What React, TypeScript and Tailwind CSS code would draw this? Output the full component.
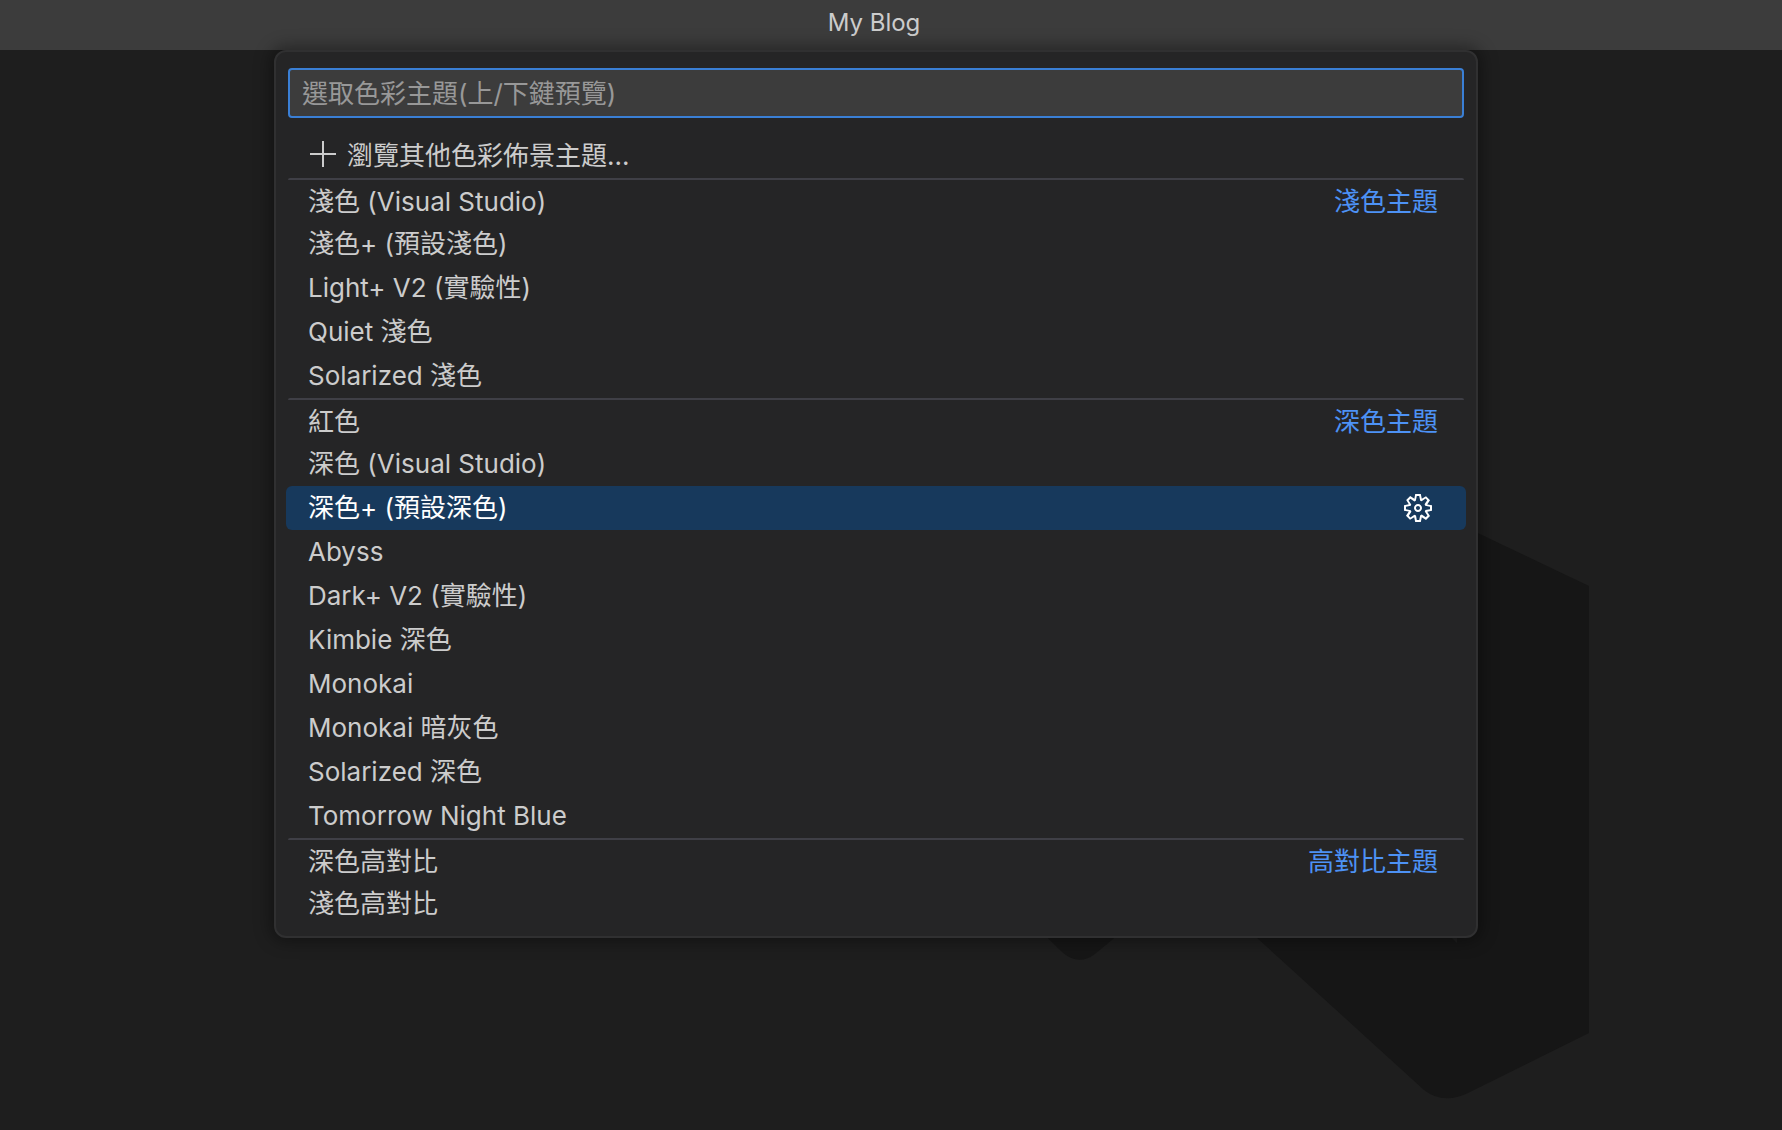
import React from "react";

type Theme = { name: string; selected?: boolean };
type Group = { label: string; themes: Theme[] };

const groups: Group[] = [
  {
    label: "淺色主題",
    themes: [
      { name: "淺色 (Visual Studio)" },
      { name: "淺色+ (預設淺色)" },
      { name: "Light+ V2 (實驗性)" },
      { name: "Quiet 淺色" },
      { name: "Solarized 淺色" },
    ],
  },
  {
    label: "深色主題",
    themes: [
      { name: "紅色" },
      { name: "深色 (Visual Studio)" },
      { name: "深色+ (預設深色)", selected: true },
      { name: "Abyss" },
      { name: "Dark+ V2 (實驗性)" },
      { name: "Kimbie 深色" },
      { name: "Monokai" },
      { name: "Monokai 暗灰色" },
      { name: "Solarized 深色" },
      { name: "Tomorrow Night Blue" },
    ],
  },
  {
    label: "高對比主題",
    themes: [{ name: "深色高對比" }, { name: "淺色高對比" }],
  },
];

function Watermark() {
  return (
    <svg
      className="pointer-events-none absolute top-[484px] left-[1000px]"
      width="600"
      height="620"
      viewBox="1000 484 600 620"
      fill="#161616"
      aria-hidden="true"
    >
      <path d="M1440 515 L1589 586 V1033 L1468 1093 Q1443 1105 1424 1090 L1256 937 L1440 760 Z" />
      <path d="M1452 938 L1457 938 L1457 943 Z" fill="#1e1e1e" />
      <path d="M1030 921 L1063 953 Q1079 966 1095 954 L1135 921 Z" />
    </svg>
  );
}

function GearIcon() {
  return (
    <svg width="32" height="32" viewBox="0 0 16 16" fill="currentColor" aria-hidden="true">
      <path
        fillRule="evenodd"
        clipRule="evenodd"
        d="M9.1 4.4L8.6 2H7.4l-.5 2.4-.7.3-2-1.3-.9.8 1.3 2-.2.7-2.4.5v1.2l2.4.5.3.8-1.3 2 .8.8 2-1.3.8.3.4 2.3h1.2l.5-2.4.8-.3 2 1.3.8-.8-1.3-2 .3-.8 2.3-.4V7.4l-2.4-.5-.3-.8 1.3-2-.8-.8-2 1.3-.7-.2zM9.4 1l.5 2.4L12 2.1l2 2-1.4 2.1 2.4.4v2.8l-2.4.5L14 12l-2 2-2.1-1.4-.5 2.4H6.6l-.5-2.4L4 13.9l-2-2 1.4-2.1L1 9.4V6.6l2.4-.5L2.1 4l2-2 2.1 1.4.4-2.4h2.8zm.6 7c0 1.1-.9 2-2 2s-2-.9-2-2 .9-2 2-2 2 .9 2 2zM8 9c.6 0 1-.4 1-1s-.4-1-1-1-1 .4-1 1 .4 1 1 1z"
      />
    </svg>
  );
}

function ThemeRow({ theme, label }: { theme: Theme; label?: string }) {
  return (
    <li
      className={
        "flex h-11 items-center rounded-md pr-7 " +
        (label ? "pt-1 " : "") +
        (theme.selected ? "bg-[#17395c] text-white" : "text-[#cccccc]")
      }
    >
      <button type="button" className="flex-1 pl-[22px] text-left leading-10">
        {theme.name}
      </button>
      {label && <span className="leading-10 text-[#4d92f5]">{label}</span>}
      {theme.selected && (
        <button type="button" aria-label="設定" className="mr-1">
          <GearIcon />
        </button>
      )}
    </li>
  );
}

export default function App() {
  return (
    <div
      lang="zh-Hant"
      className="relative min-h-screen overflow-hidden bg-[#1e1e1e] font-[Inter,'Noto_Sans_CJK_TC',sans-serif] text-[26px] text-[#cccccc]"
    >
      <Watermark />
      <header className="flex h-[50px] items-center justify-center bg-[#3c3c3c] pr-[34px] pb-1">
        <h1 className="text-2xl">My Blog</h1>
      </header>
      <main className="relative pr-[30px]">
        <section className="mx-auto w-full max-w-[1204px] rounded-xl border-2 border-[#303031] bg-[#252526] px-[10px] pt-4 pb-[10px] shadow-[0_0_16px_4px_rgba(0,0,0,0.36)]">
          <div className="mx-[2px]">
            <input
              type="text"
              aria-label="選取色彩主題"
              placeholder="選取色彩主題(上/下鍵預覽)"
              className="block h-[50px] w-full rounded-[4px] border-2 border-[#3a7fd5] bg-[#3c3c3c] px-3 outline-none placeholder:text-[#989898]"
            />
          </div>
          <button type="button" className="mt-4 flex h-11 w-full items-center pl-[22px] text-left">
            <svg width="30" height="30" viewBox="0 0 30 30" className="mr-[9px] mb-1" aria-hidden="true">
              <path d="M15 2V28M2 15H28" stroke="#cccccc" strokeWidth="2" />
            </svg>
            <span className="leading-[44px]">瀏覽其他色彩佈景主題...</span>
          </button>
          {groups.map((group) => (
            <ul key={group.label} aria-label={group.label} className="relative">
              <li aria-hidden="true" className="absolute inset-x-[2px] top-0 h-[2px] rounded-t-xs bg-[#3f3f46]" />
              {group.themes.map((theme, i) => (
                <ThemeRow key={theme.name} theme={theme} label={i === 0 ? group.label : undefined} />
              ))}
            </ul>
          ))}
        </section>
      </main>
    </div>
  );
}
